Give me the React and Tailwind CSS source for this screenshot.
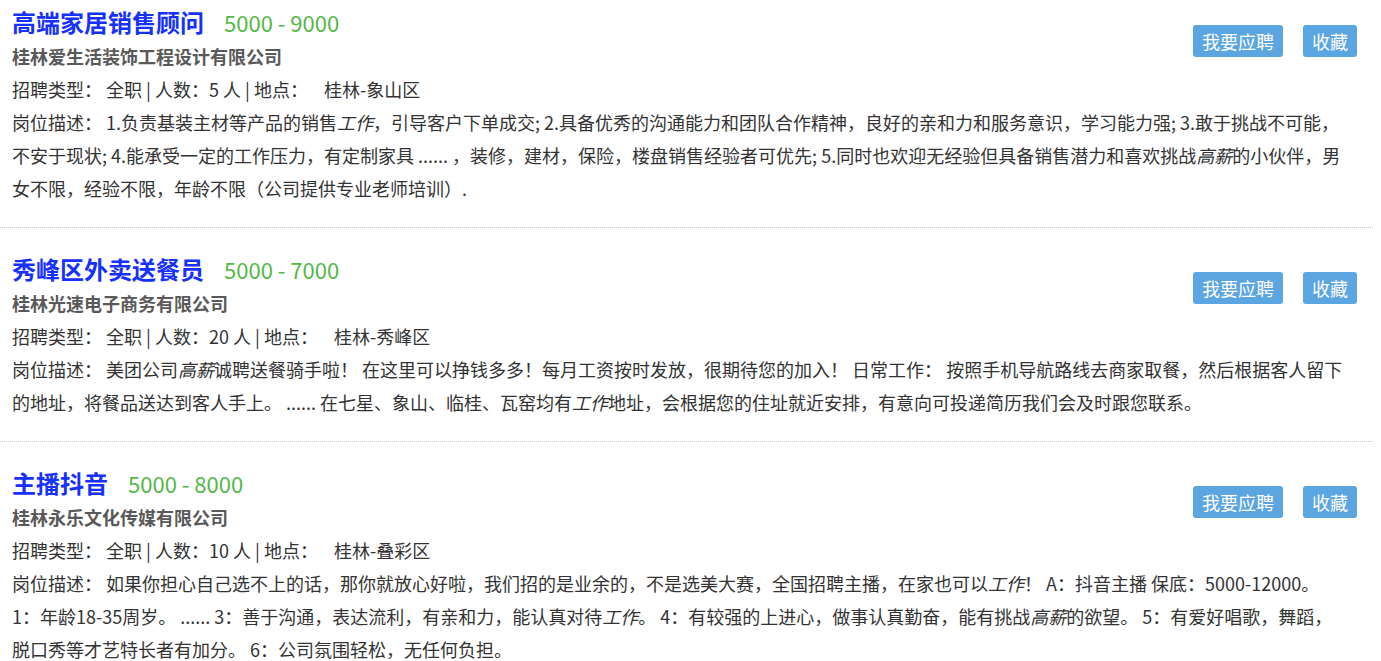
import React from 'react';

const jobs = [
  {
    title: '高端家居销售顾问',
    salary: '5000 - 9000',
    company: '桂林爱生活装饰工程设计有限公司',
    count: '5',
    place: '桂林-象山区',
    desc: (
      <>
        1.负责基装主材等产品的销售<em>工作</em>，引导客户下单成交; 2.具备优秀的沟通能力和团队合作精神，良好的亲和力和服务意识，学习能力强; 3.敢于挑战不可能，不安于现状; 4.能承受一定的工作压力，有定制家具 ...... ，装修，建材，保险，楼盘销售经验者可优先; 5.同时也欢迎无经验但具备销售潜力和喜欢挑战<em>高薪</em>的小伙伴，男女不限，经验不限，年龄不限（公司提供专业老师培训）.
      </>
    ),
  },
  {
    title: '秀峰区外卖送餐员',
    salary: '5000 - 7000',
    company: '桂林光速电子商务有限公司',
    count: '20',
    place: '桂林-秀峰区',
    desc: (
      <>
        美团公司<em>高薪</em>诚聘送餐骑手啦！ 在这里可以挣钱多多！每月工资按时发放，很期待您的加入！ 日常工作： 按照手机导航路线去商家取餐，然后根据客人留下的地址，将餐品送达到客人手上。 ...... 在七星、象山、临桂、瓦窑均有<em>工作</em>地址，会根据您的住址就近安排，有意向可投递简历我们会及时跟您联系。
      </>
    ),
  },
  {
    title: '主播抖音',
    salary: '5000 - 8000',
    company: '桂林永乐文化传媒有限公司',
    count: '10',
    place: '桂林-叠彩区',
    desc: (
      <>
        如果你担心自己选不上的话，那你就放心好啦，我们招的是业余的，不是选美大赛，全国招聘主播，在家也可以<em>工作</em>！ A：抖音主播 保底：5000-12000。 1：年龄18-35周岁。 ...... 3：善于沟通，表达流利，有亲和力，能认真对待<em>工作</em>。 4：有较强的上进心，做事认真勤奋，能有挑战<em>高薪</em>的欲望。 5：有爱好唱歌，舞蹈，脱口秀等才艺特长者有加分。 6：公司氛围轻松，无任何负担。
      </>
    ),
  },
];

const JobItem = ({ job }) => {
  return (
    <div className="border-b border-dotted border-[#c8c8c8] pl-3 pr-3 pt-[23px] pb-[22px]">
      <div className="flex justify-between items-start">
        <div>
          {/* title + salary */}
          <div className="flex items-center h-9">
            <a className="text-[24px] font-bold text-[#1530ff] cursor-pointer">{job.title}</a>
            <span className="ml-[20px] text-[22px] text-[#52b846]">{job.salary}</span>
          </div>
          <div className="text-[18px] leading-[33px] font-bold text-[#595959]">{job.company}</div>
          <div className="text-[18px] leading-[33px] text-[#333]">
            招聘类型：&nbsp;全职 | 人数：{job.count} 人 | 地点：&nbsp;&nbsp;&nbsp;&nbsp;{job.place}
          </div>
        </div>
        <div className="flex gap-5 mt-[21px] mr-1">
          <button className="bg-[#5ba5e1] text-white text-[18px] h-8 px-[9px] rounded-[3px]">我要应聘</button>
          <button className="bg-[#5ba5e1] text-white text-[18px] h-8 px-[9px] rounded-[3px]">收藏</button>
        </div>
      </div>
      <p className="text-[18px] leading-[33px] text-[#333] pr-[13px]">
        岗位描述：&nbsp;{job.desc}
      </p>
    </div>
  );
};

export default function App() {
  return (
    <div className="bg-white w-[1373px] -mt-[19px] font-['Microsoft_YaHei','Noto_Sans_CJK_SC',sans-serif]">
      {jobs.map((job) => (
        <JobItem key={job.title} job={job} />
      ))}
    </div>
  );
}
